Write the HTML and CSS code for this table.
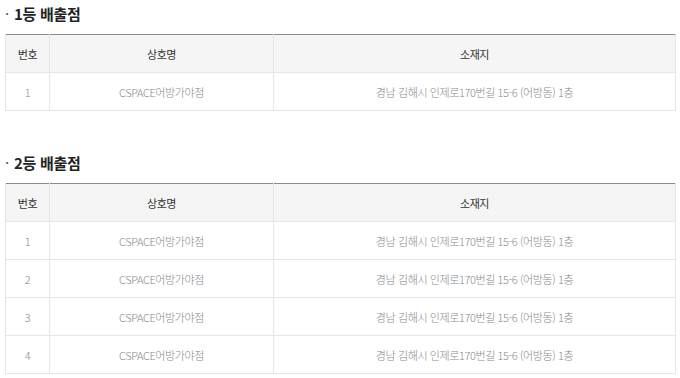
FILE: index.html
```html
<!DOCTYPE html>
<html lang="ko">
<head>
<meta charset="utf-8">
<link rel="stylesheet" href="styles.css">
</head>
<body>
<div class="page">
  <section class="block">
    <h3 class="title"><span class="dot">·</span>1등 배출점</h3>
    <table class="tbl">
      <colgroup><col class="c1"><col class="c2"><col class="c3"></colgroup>
      <thead><tr><th>번호</th><th>상호명</th><th>소재지</th></tr></thead>
      <tbody>
        <tr><td>1</td><td>CSPACE어방가야점</td><td>경남 김해시 인제로170번길 15-6 (어방동) 1층</td></tr>
      </tbody>
    </table>
  </section>
  <section class="block second">
    <h3 class="title"><span class="dot">·</span>2등 배출점</h3>
    <table class="tbl">
      <colgroup><col class="c1"><col class="c2"><col class="c3"></colgroup>
      <thead><tr><th>번호</th><th>상호명</th><th>소재지</th></tr></thead>
      <tbody>
        <tr><td>1</td><td>CSPACE어방가야점</td><td>경남 김해시 인제로170번길 15-6 (어방동) 1층</td></tr>
        <tr><td>2</td><td>CSPACE어방가야점</td><td>경남 김해시 인제로170번길 15-6 (어방동) 1층</td></tr>
        <tr><td>3</td><td>CSPACE어방가야점</td><td>경남 김해시 인제로170번길 15-6 (어방동) 1층</td></tr>
        <tr><td>4</td><td>CSPACE어방가야점</td><td>경남 김해시 인제로170번길 15-6 (어방동) 1층</td></tr>
      </tbody>
    </table>
  </section>
</div>
</body>
</html>
```
FILE: styles.css
```css
html, body {
  margin: 0;
  padding: 0;
  background: #fff;
}
body {
  font-family: "Noto Sans CJK KR", "Noto Sans", sans-serif;
  color: #666;
}
.page {
  padding: 0 4px 0 5px;
  width: 671px;
}
.block.second {
  margin-top: 38px;
}
.title {
  margin: 0;
  height: 34px;
  box-sizing: border-box;
  padding-top: 3px;
  font-size: 15px;
  line-height: 22px;
  font-weight: 700;
  color: #222;
  letter-spacing: -0.3px;
}
.dot {
  display: inline-block;
  width: 9px;
  font-weight: 400;
  color: #555;
}
.tbl {
  width: 100%;
  border-collapse: collapse;
  table-layout: fixed;
  border-top: 1px solid #8a8a8a;
  border-bottom: 1px solid #e4e4e4;
  font-size: 11px;
  letter-spacing: -0.4px;
}
.c1 { width: 44px; }
.c2 { width: 224px; }
.tbl th, .tbl td {
  height: 37px;
  padding: 0;
  text-align: center;
  border-bottom: 1px solid #e6e6e6;
  border-left: 1px solid #e6e6e6;
  border-right: 1px solid #e6e6e6;
}
.tbl th {
  background: #f5f5f5;
  font-weight: 400;
  color: #333;
}
.tbl td {
  color: #888;
  font-weight: 300;
}
```
